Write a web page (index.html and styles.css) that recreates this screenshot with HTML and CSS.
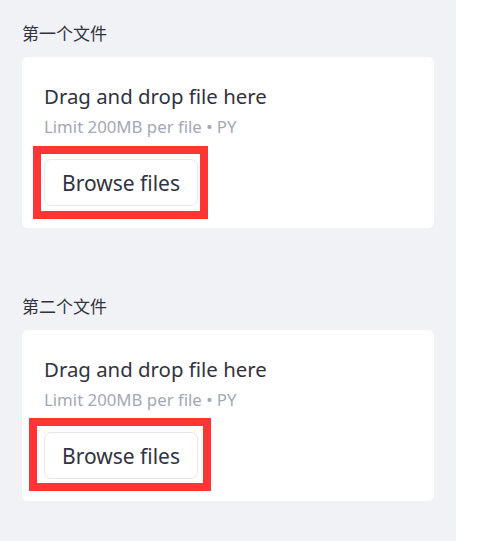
FILE: index.html
```html
<!DOCTYPE html>
<html lang="zh">
<head>
<meta charset="utf-8">
<title>File uploaders</title>
<link rel="stylesheet" href="styles.css">
</head>
<body>
<div class="page">
  <main class="panel">
    <section class="uploader first">
      <label class="label">第一个文件</label>
      <div class="dropzone">
        <div class="instructions">
          <span class="title">Drag and drop file here</span>
          <span class="limit">Limit 200MB per file • PY</span>
        </div>
        <div class="btn-wrap">
          <button class="browse">Browse files</button>
          <span class="highlight hl-a"></span>
        </div>
      </div>
    </section>
    <section class="uploader second">
      <label class="label">第二个文件</label>
      <div class="dropzone">
        <div class="instructions">
          <span class="title">Drag and drop file here</span>
          <span class="limit">Limit 200MB per file • PY</span>
        </div>
        <div class="btn-wrap">
          <button class="browse">Browse files</button>
          <span class="highlight hl-b"></span>
        </div>
      </div>
    </section>
  </main>
  <aside class="side"></aside>
</div>
</body>
</html>
```
FILE: styles.css
```css
* { box-sizing: border-box; }
html, body {
  margin: 0;
  padding: 0;
  background: #ffffff;
}
body {
  font-family: "Noto Sans", "Noto Sans CJK SC", sans-serif;
  color: #31333f;
}
.page {
  display: flex;
  width: 500px;
  height: 541px;
  overflow: hidden;
}
.panel {
  width: 456px;
  height: 541px;
  background: #f0f2f6;
  padding: 21px 22px 0 22px;
  display: flex;
  flex-direction: column;
  gap: 66px;
}
.side {
  flex: 1;
  background: #ffffff;
}
.uploader {
  display: flex;
  flex-direction: column;
  gap: 12px;
}
.label {
  font-family: "Noto Sans CJK SC", sans-serif;
  font-size: 17px;
  line-height: 24px;
  color: #31333f;
}
.dropzone {
  background: #ffffff;
  border-radius: 6px;
  height: 171px;
  padding: 23px 22px 0 22px;
  display: flex;
  flex-direction: column;
}
.instructions {
  display: flex;
  flex-direction: column;
}
.title {
  font-size: 20.4px;
  line-height: 32px;
  color: #31333f;
  white-space: nowrap;
}
.limit {
  font-size: 16.8px;
  line-height: 30px;
  color: #a3a8b8;
  white-space: nowrap;
}
.btn-wrap {
  position: relative;
  align-self: flex-start;
  margin-top: 17px;
}
.browse {
  font-family: "Noto Sans", sans-serif;
  font-size: 21px;
  line-height: 28px;
  color: #31333f;
  background: #ffffff;
  border: 1px solid #e4e7ee;
  border-radius: 7px;
  padding: 0;
  width: 154px;
  height: 47px;
  display: block;
  text-align: center;
  white-space: nowrap;
}
.highlight {
  position: absolute;
  border: 8px solid #fd3535;
  pointer-events: none;
}
.hl-a {
  left: -11px;
  right: -10px;
  top: -13px;
  bottom: -13px;
}
.hl-b {
  left: -15px;
  right: -13px;
  top: -14px;
  bottom: -12px;
}
```
